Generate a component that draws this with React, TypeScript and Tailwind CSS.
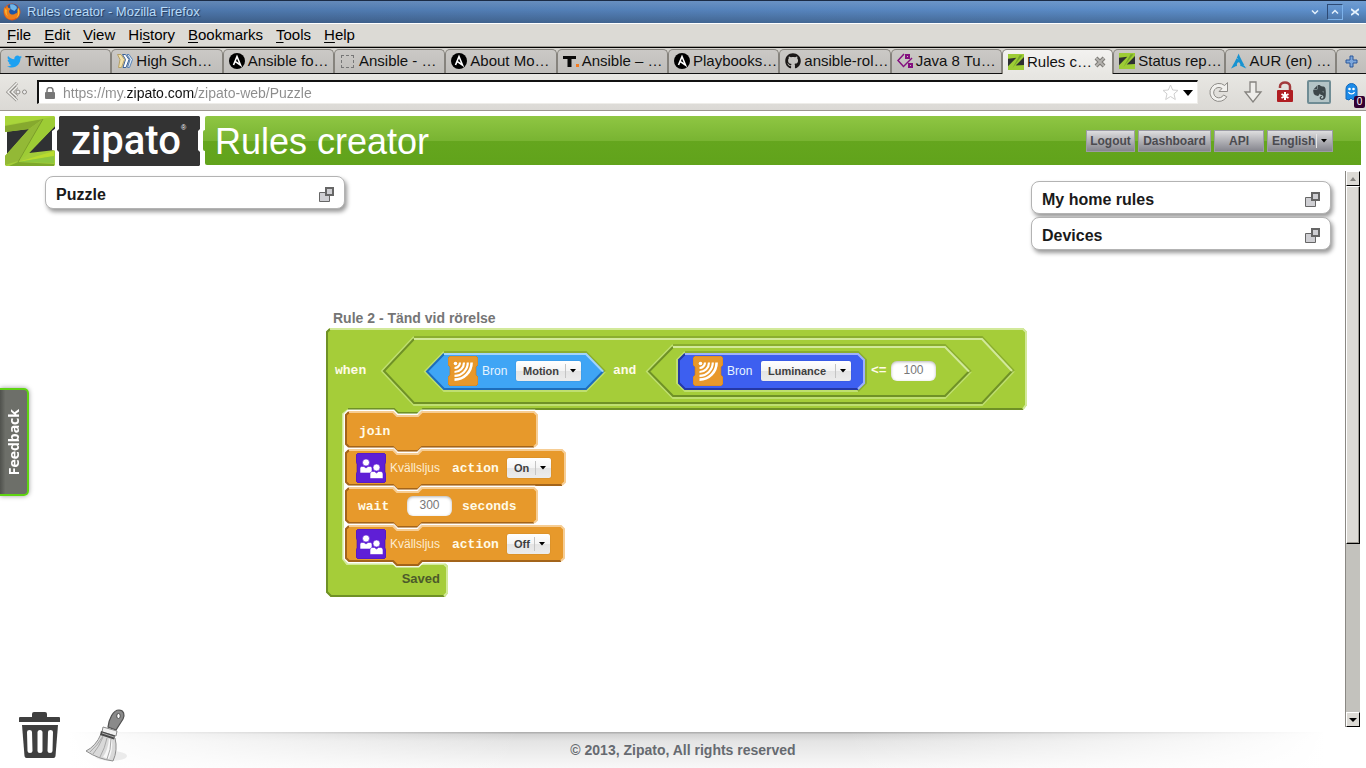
import type { ReactNode } from "react";
import { FaEvernote, FaGithub, FaTwitter } from "react-icons/fa";
import { SiArchlinux } from "react-icons/si";
import clsx from "clsx";

/* ---------- browser icons ---------- */

function FirefoxIcon() {
     return (
          <svg width="18" height="18" viewBox="0 0 18 18" aria-hidden="true">
               <circle cx="9" cy="9" r="8.5" fill="#d9541a" />
               <circle cx="9.5" cy="7" r="6.3" fill="#1f56a5" />
               <path d="M7 1.500a6 6 0 0 1 7 3.4l-2.500 3-4-2z" fill="#6fb6e8" />
               <path
                    d="M1 4.500 3 5l1-2.500 1.200 2.200c1 .2 2 .7 2.300 1.400L6 8l.6 2.200c1.600 2 4.600 1.600 5.600.2 1.800.2 2.500-1 2.300-3.400l1.500 2c-.4 4.600-3.400 7.500-7.500 7.500C3.500 16.500 0 12 1 4.500z"
                    fill="#ee7f1b"
               />
               <path d="M15 4.500c2.500 3 2 9-2 11 2.500-3.500 2.500-6 1.500-8.500z" fill="#fbc02d" />
               <path d="M2 6c-.5 3 .5 6 3 7.500C3.500 11 3.500 9 4 7z" fill="#f9b233" />
          </svg>
     );
}

function AnsibleIcon() {
     return (
          <svg width="16" height="16" viewBox="0 0 16 16" aria-hidden="true">
               <circle cx="8" cy="8" r="8" fill="#000" />
               <path d="M4.500 12 8 3.500l3.500 8.500L6 8.300" fill="none" stroke="#fff" strokeWidth="1.600" />
          </svg>
     );
}

function BooksIcon() {
     return (
          <svg width="16" height="16" viewBox="0 0 16 16" strokeWidth="1" aria-hidden="true">
               <path d="M10 1.500h2l3.500 5-3 8h-2l2.500-8z" fill="#dbe9f8" stroke="#5b83b5" />
               <path d="M5.500 1.500h3l3.500 5-3 8H6l2.500-8z" fill="#fff" stroke="#3b6399" />
               <path d="M.5 1.500h3.500l3.500 5-3 8H1.500L3 6.500z" fill="#f1e0a8" stroke="#b5a069" />
          </svg>
     );
}

function TIcon() {
     return (
          <svg width="16" height="16" viewBox="0 0 16 16" aria-hidden="true">
               <path d="M0 3h13v3H8.500v8h-4V6H0z" fill="#0a0a0a" />
               <path d="M13 11h3v3h-3z" fill="#f47a1f" />
          </svg>
     );
}

function JavaIcon() {
     return (
          <svg width="16" height="16" viewBox="0 0 16 16" fill="none" stroke="#84107f" aria-hidden="true">
               <path d="M7 1 1 7.500 7 14" strokeWidth="1.500" />
               <path d="M15 5 7 13" strokeWidth="1.500" />
               <path d="M9 2h3v3H9zM12 11h3v3h-3z" strokeWidth="2" />
          </svg>
     );
}

function ZIcon() {
     return (
          <svg width="16" height="16" viewBox="0 0 50 50" aria-hidden="true">
               <path d="M0 0h50v50H0z" fill="#2e3032" />
               <path d="M0 0h50v9L24 36l26-2v16H0V38l26-26L0 15z" fill="#9dcc35" />
               <path d="M36 4h9L14 44z" fill="#74a52a" />
          </svg>
     );
}

function BackIcon() {
     return (
          <svg width="22" height="20" viewBox="0 0 22 20" fill="none" aria-hidden="true">
               <path d="m11 1-9 9 9 8.500M11 5 6 10l5 4.500" stroke="#8e8c88" strokeWidth="3" />
               <path d="m11 1-9 9 9 8.500M11 5 6 10l5 4.500" stroke="#f1f0ed" strokeWidth="1.500" />
               <circle cx="12" cy="10" r="2" stroke="#8e8c88" fill="#eee" />
               <circle cx="18.500" cy="10" r="2" stroke="#8e8c88" fill="#eee" />
          </svg>
     );
}

function PadlockIcon() {
     return (
          <svg width="12" height="12" viewBox="0 0 12 12" aria-hidden="true">
               <path d="M3 6V3.500a3 3 0 0 1 6 0V6" fill="none" stroke="#777" strokeWidth="1.500" />
               <rect x="1" y="5" width="10" height="7" rx="1" fill="#777" />
          </svg>
     );
}

function StarIcon() {
     return (
          <svg width="17" height="17" viewBox="0 0 17 17" aria-hidden="true">
               <path
                    d="m8.500 1 2.200 5 5.300.4-4 3.500 1.300 5.600-4.800-3-4.800 3L5 9.900 1 6.400 6.300 6z"
                    fill="#fff"
                    stroke="#cfcfcf"
               />
          </svg>
     );
}

function ReloadIcon() {
     return (
          <svg width="22" height="22" viewBox="0 0 22 22" aria-hidden="true">
               <path
                    d="M19.500 1.500v9H11l3-3A5.200 5.200 0 1 0 15.500 14l3.300 1.800A9 9 0 1 1 16.700 4.500z"
                    fill="#f1f0ed"
                    stroke="#8e8c88"
               />
          </svg>
     );
}

function DownloadIcon() {
     return (
          <svg width="20" height="22" viewBox="0 0 20 22" aria-hidden="true">
               <path d="M7 1h6v10h5l-8 10-8-10h5z" fill="#eeedea" stroke="#85837f" strokeWidth="1.300" />
          </svg>
     );
}

function RedLockIcon() {
     return (
          <svg width="18" height="22" viewBox="0 0 18 22" aria-hidden="true">
               <path d="M4 7V5.500C4 0 14 0 14 5.500V10" fill="none" stroke="#a33a3c" strokeWidth="2.500" />
               <rect x="1" y="9" width="16" height="12" rx="1" fill="#b01d22" />
               <path d="M9 11v8M5.500 13l7 4M12.500 13l-7 4" stroke="#fff" strokeWidth="2" />
          </svg>
     );
}

function GhostIcon() {
     return (
          <svg width="15" height="18" viewBox="0 0 15 18" aria-hidden="true">
               <path
                    d="M2 16V6a5.500 5.500 0 0 1 11 0v10l-2-1.500L9 17l-2-2-2 2z"
                    fill="#1b8ae8"
                    stroke="#1568b8"
               />
               <circle cx="5.500" cy="6" r="1.300" fill="#fff" />
               <circle cx="9.500" cy="6" r="1.300" fill="#fff" />
               <path d="M4.500 9c1 2.500 5 2.500 6 0" fill="none" stroke="#fff" strokeWidth="1.200" />
          </svg>
     );
}

/* ---------- browser chrome ---------- */

function TitleBar() {
     return (
          <div className="flex h-[23px] items-center justify-between border-t border-[#1b2b45] bg-[linear-gradient(180deg,rgba(255,255,255,.12),transparent_40%,rgba(0,0,0,.22)),linear-gradient(90deg,#4b73a7,#5e90cc)] pr-[3px] pl-[3px]">
               <div className="flex items-center gap-[6px]">
                    <FirefoxIcon />
                    <span className="text-[13px] leading-5 text-[#b9dcf8] [text-shadow:1px_1px_1px_#22385c]">
                         Rules creator - Mozilla Firefox
                    </span>
               </div>
               <div className="flex items-center gap-1 text-[#e4f1fc]">
                    <button aria-label="Minimize" className="flex size-4 items-center justify-center">
                         <svg width="8" height="8" viewBox="0 0 8 8" fill="none" stroke="currentColor" strokeWidth="1.500">
                              <path d="m1 2.500 3 3 3-3" />
                         </svg>
                    </button>
                    <button
                         aria-label="Maximize"
                         className="flex size-4 items-center justify-center border border-t-[#2d4a75] border-r-[#7db2ea] border-b-[#7db2ea] border-l-[#2d4a75]"
                    >
                         <svg width="8" height="8" viewBox="0 0 8 8" fill="none" stroke="currentColor" strokeWidth="1.500">
                              <path d="m1 5.500 3-3 3 3" />
                         </svg>
                    </button>
                    <button aria-label="Close" className="flex size-4 items-center justify-center">
                         <svg width="8" height="8" viewBox="0 0 8 8" fill="none" stroke="currentColor" strokeWidth="1.800">
                              <path d="m0 1 8 6M0 7l8-6" />
                         </svg>
                    </button>
               </div>
          </div>
     );
}

const MENUS = [
     ["", "F", "ile"],
     ["", "E", "dit"],
     ["", "V", "iew"],
     ["Hi", "s", "tory"],
     ["", "B", "ookmarks"],
     ["", "T", "ools"],
     ["", "H", "elp"],
];

function MenuBar() {
     return (
          <div className="flex h-[25px] items-center gap-[13px] border-t border-b border-t-white border-b-black bg-[#dcdad5] px-[7px] pb-[2px] text-[15px] leading-5 text-black shadow-[inset_0_-1px_0_#9d9a93]">
               {MENUS.map(([before, key, after]) => (
                    <button key={key + after}>
                         {before}
                         <span className="underline underline-offset-2">{key}</span>
                         {after}
                    </button>
               ))}
          </div>
     );
}

type TabItem = { label: string; icon: ReactNode; active?: boolean };

const TABS: TabItem[] = [
     { label: "Twitter", icon: <FaTwitter size={15} color="#1da1f2" /> },
     { label: "High Sch…", icon: <BooksIcon /> },
     { label: "Ansible fo…", icon: <AnsibleIcon /> },
     {
          label: "Ansible - …",
          icon: <span className="block size-[13px] border border-dashed border-[#777]" />,
     },
     { label: "About Mo…", icon: <AnsibleIcon /> },
     { label: "Ansible – …", icon: <TIcon /> },
     { label: "Playbooks…", icon: <AnsibleIcon /> },
     { label: "ansible-rol…", icon: <FaGithub size={16} color="#1b1817" /> },
     { label: "Java 8 Tu…", icon: <JavaIcon /> },
     { label: "Rules c…", icon: <ZIcon />, active: true },
     { label: "Status rep…", icon: <ZIcon /> },
     { label: "AUR (en) …", icon: <SiArchlinux size={16} color="#1793d1" /> },
];

function TabStrip() {
     return (
          <div className="flex h-[26px] bg-[#d3d1cc] pt-px shadow-[inset_0_-1px_0_#111]">
               {TABS.map((tab, i) => (
                    <div
                         key={i}
                         className={clsx(
                              "flex min-w-0 flex-1 items-center rounded-t-[5px] border-x border-t border-[#86837d] pr-1 pb-px pl-[5px]",
                              tab.active
                                   ? "bg-linear-to-b from-[#f3f2f0] to-[#e8e7e3]"
                                   : "mb-px bg-linear-to-b from-[#cbc9c6] to-[#bfbdba]",
                         )}
                    >
                         <button className="flex min-w-0 flex-1 items-center gap-[3px] text-[15px] leading-5 whitespace-nowrap text-[#111]">
                              <span className="flex w-4 shrink-0 justify-center">{tab.icon}</span>
                              {tab.label}
                         </button>
                         {tab.active && (
                              <button aria-label="Close tab" className="px-0.5">
                                   <svg width="12" height="12" viewBox="0 0 12 12">
                                        <path d="m2 2 8 8M10 2l-8 8" stroke="#7c7a76" strokeWidth="4" />
                                        <path d="m2 2 8 8M10 2l-8 8" stroke="#b4b2ae" strokeWidth="2" />
                                   </svg>
                              </button>
                         )}
                    </div>
               ))}
               <button
                    aria-label="New tab"
                    className="mb-px flex w-[30px] items-center justify-center rounded-tl-[5px] border-t border-l border-[#86837d] bg-linear-to-b from-[#cbc9c6] to-[#bfbdba]"
               >
                    <svg width="13" height="13" viewBox="0 0 13 13">
                         <path d="M5 1h3v4h4v3H8v4H5V8H1V5h4z" fill="#7da7dc" stroke="#2b569a" />
                    </svg>
               </button>
          </div>
     );
}

function NavBar() {
     return (
          <div className="flex h-[37px] items-center border-b border-[#9b9690] bg-linear-to-b from-[#e8e7e3] to-[#dbd9d5] pr-px pl-[6px]">
               <button aria-label="Back" className="w-[31px]">
                    <BackIcon />
               </button>
               <div className="flex h-6 flex-1 items-center border border-t-2 border-l-2 border-[#eeede9] border-t-[#111] border-l-[#111] bg-white pr-1 pl-[5px]">
                    <PadlockIcon />
                    {/* the host part of the address is darker than the rest */}
                    <input
                         aria-label="Address"
                         defaultValue="https://my.zipato.com/zipato-web/Puzzle"
                         className="ml-[7px] h-5 min-w-0 flex-1 bg-[linear-gradient(90deg,#8c8c8c_64px,#111_64px,#111_132px,#8c8c8c_132px)] bg-clip-text text-[14px] leading-5 text-transparent outline-none"
                    />
                    <button aria-label="Bookmark this page">
                         <StarIcon />
                    </button>
                    <button aria-label="Show history" className="ml-1">
                         <svg width="10" height="6" viewBox="0 0 10 6">
                              <path d="M0 0h10L5 6z" />
                         </svg>
                    </button>
               </div>
               <div className="ml-[10px] flex items-center gap-[13px]">
                    <button aria-label="Reload">
                         <ReloadIcon />
                    </button>
                    <button aria-label="Downloads">
                         <DownloadIcon />
                    </button>
                    <button aria-label="Passwords">
                         <RedLockIcon />
                    </button>
                    <button
                         aria-label="Clip page"
                         className="flex size-6 items-center justify-center rounded-xs border-2 border-[#6f8c94] bg-[#b4c4c6] text-[#3d474a]"
                    >
                         <FaEvernote size={17} />
                    </button>
                    <button aria-label="Trackers" className="relative h-6 w-[21px]">
                         <GhostIcon />
                         <span className="absolute right-0 -bottom-1 h-3 w-[11px] rounded-xs bg-[#330033] text-center text-[10px] leading-3 text-white">
                              0
                         </span>
                    </button>
               </div>
          </div>
     );
}

/* ---------- zipato header ---------- */

function Logo() {
     return (
          <div className="relative h-[50px] w-[195px] shrink-0">
               <svg className="absolute inset-0" width="195" height="50" viewBox="0 0 195 50" aria-hidden="true">
                    <path d="M2 2h48v11l-3 2v19l3 2v12H2z" fill="#2f3133" />
                    <path d="M1 0h48l1 1v9L24 37l26-3v15l-1 1H1l-1-1V40l24-27L0 16V1z" fill="#a3cd39" />
                    <path d="M0 10 38 3 24 13 0 16z" fill="#86a92e" />
                    <path d="M0 0h50L36 3 0 9z" fill="#a9d53a" />
                    <path d="M38 3 24 13 0 40v9l13-4z" fill="#93b936" />
                    <path d="M38 3 50 2v8L24 37l-11 9z" fill="#9dcc35" />
                    <path d="m13 46 36-11v5z" fill="#b9dc2e" />
                    <path d="m13 46 36-6v7z" fill="#8cc63f" />
                    <path d="m13 46 36 2v2H4z" fill="#7da82b" />
                    <path d="M38 3 13 46" stroke="#6b8a24" strokeWidth=".7" />
                    <path d="M50 13v22l-2-2V16z" fill="#fff" />
                    <path
                         d="M55 0h139l1 1v12l-2 2v19l2 2v13l-1 1H55l-1-1V36l-2-2V15l2-2V1z"
                         fill="#333"
                    />
               </svg>
               <span className="absolute top-0 left-[66px] font-[Roboto] text-[40px] leading-[50px] font-medium text-white">
                    zipato
               </span>
               <span className="absolute top-[7px] left-[176px] text-[7px] leading-[10px] text-white">®</span>
          </div>
     );
}

function HeaderButton({ children, className }: { children: ReactNode; className: string }) {
     return (
          <button
               className={clsx(
                    "h-[22px] border border-[#9c9ca4] bg-linear-to-b from-[#dededf] to-[#86868e] text-[12px] leading-5 font-bold text-[#4b4b50]",
                    className,
               )}
          >
               {children}
          </button>
     );
}

function Arrow() {
     return (
          <svg width="6" height="4" viewBox="0 0 6 4" aria-hidden="true">
               <path d="M0 0h6L3 3.500z" fill="#000" />
          </svg>
     );
}

function Header() {
     return (
          <header className="mx-[5px] mt-[5px] flex h-[50px]">
               <Logo />
               <div className="relative mb-px ml-[5px] flex flex-1 items-center justify-between rounded-l-xs bg-[linear-gradient(180deg,#8fc643,#79b432_50%,#65a61e_50%,#61a31b)] pr-[28px] pl-[10px]">
                    <span className="absolute top-[14px] -left-[2px] h-[21px] w-[3px] rounded-l-xs bg-[linear-gradient(180deg,#82bc3a,#79b432_50%,#65a61e_50%)]" />
                    <h1 className="pt-[2px] text-[36px] leading-[47px] text-white">Rules creator</h1>
                    <nav className="flex gap-[3px]">
                         <HeaderButton className="w-[49px]">Logout</HeaderButton>
                         <HeaderButton className="w-[73px]">Dashboard</HeaderButton>
                         <HeaderButton className="w-[50px]">API</HeaderButton>
                         <div className="relative">
                              <select
                                   aria-label="Language"
                                   className="block h-[22px] w-[66px] appearance-none border border-[#9c9ca4] bg-linear-to-b from-[#dededf] to-[#86868e] pl-1 text-[12px] leading-5 font-bold text-[#4b4b50]"
                              >
                                   <option>English</option>
                              </select>
                              <span className="pointer-events-none absolute inset-y-1 right-[6px] flex items-center border-l border-[#e6e6e6] pl-1">
                                   <Arrow />
                              </span>
                         </div>
                    </nav>
               </div>
          </header>
     );
}

/* ---------- floating panels ---------- */

function Panel({ title }: { title: string }) {
     return (
          <section className="flex h-[33px] w-[300px] items-center justify-between rounded-[8px] border border-[#b3b3b3] bg-white pr-[10px] pl-[10px] shadow-[2px_3px_4px_rgba(0,0,0,.4)]">
               <h2 className="pt-[5px] text-[16px] leading-5 font-bold text-[#1a1a1a]">{title}</h2>
               <button aria-label={`Open ${title}`} className="pt-[4px]">
                    <svg width="16" height="16" viewBox="0 0 16 16" fill="#cfcfd3" stroke="#666">
                         <path d="M1.500 5.500h10v9h-10z" strokeWidth="1" />
                         <path d="M8 1h7v7H8z" strokeWidth="2" />
                    </svg>
               </button>
          </section>
     );
}

/* ---------- puzzle blocks ---------- */

const TONES = {
     groove: { fill: "none", light: "#d2e99a", dark: "#6f9126" },
     sky: { fill: "#3fa5f5", light: "#a3d4fb", dark: "#1d6dbb" },
     royal: { fill: "#3d5ff0", light: "#a0b2fb", dark: "#2438a6" },
};

type SlotProps = {
     tone: keyof typeof TONES;
     w: number;
     h: number;
     cut: number;
     rounded?: boolean;
     className?: string;
     children: ReactNode;
};

// Bevelled outline at distance d from the edge, as a lit part and a shaded part.
function bevel(w: number, h: number, cut: number, rounded: boolean, d: number) {
     if (rounded) {
          return {
               lit: `M${cut},${d} H${w - cut} L${w - d},${cut} V${h - cut} L${w - cut},${h - d}`,
               shaded: `M${cut},${d} L${d},${cut} V${h - cut} L${cut},${h - d} H${w - cut}`,
          };
     }
     const mid = h / 2;
     return {
          lit: `M${cut},${d} H${w - cut} L${w - d},${mid}`,
          shaded: `M${cut},${d} L${d},${mid} L${cut},${h - d} H${w - cut} L${w - d},${mid}`,
     };
}

function Slot({ tone, w, h, cut, rounded = false, className, children }: SlotProps) {
     const { fill, light, dark } = TONES[tone];
     const outer = bevel(w, h, cut, rounded, -1);
     const inner = bevel(w, h, cut, rounded, 1);
     const body = rounded
          ? `M${cut},0 H${w - cut} L${w},${cut} V${h - cut} L${w - cut},${h} H${cut} L0,${h - cut} V${cut} Z`
          : `M${cut},0 H${w - cut} L${w},${h / 2} L${w - cut},${h} H${cut} L0,${h / 2} Z`;
     return (
          <div className={clsx("relative flex items-center", className)}>
               <svg
                    className="absolute inset-0 overflow-visible"
                    width={w}
                    height={h}
                    fill="none"
                    strokeWidth="2"
                    aria-hidden="true"
               >
                    <path d={outer.shaded} stroke="#bfdf70" />
                    <path d={outer.lit} stroke="#8aae2f" />
                    <path d={body} fill={fill} />
                    <path d={inner.shaded} stroke={dark} />
                    <path d={inner.lit} stroke={light} />
               </svg>
               <div className="relative flex items-center">{children}</div>
          </div>
     );
}

function SensorIcon() {
     return (
          <svg width="30" height="30" viewBox="0 0 30 30" aria-hidden="true">
               <path
                    d="M2 0h26l2 2v7l-2 2v8l2 2v7l-2 2H2l-2-2v-7l2-2v-8L0 9V2z"
                    fill="#e8982b"
                    stroke="#c97a17"
                    strokeWidth=".6"
               />
               <circle cx="7.500" cy="7.500" r="1.800" fill="#fff" />
               <g fill="none" stroke="#fff" strokeWidth="2.200">
                    <path d="M12 6.500A5.500 5.500 0 0 1 6.500 12" />
                    <path d="M16 6.500A9.500 9.500 0 0 1 6.500 16" />
                    <path d="M19.800 6.500A13.300 13.300 0 0 1 6.500 19.800" />
                    <path d="M23.600 6.500A17.100 17.100 0 0 1 6.500 23.600" strokeWidth="2.600" />
               </g>
          </svg>
     );
}

function PeopleIcon() {
     return (
          <svg width="30" height="30" viewBox="0 0 30 30" aria-hidden="true">
               <path
                    d="M2 0h26l2 2v7l-1 2v8l1 2v7l-2 2H2l-2-2v-7l1-2v-8L0 9V2z"
                    fill="#5f1fd6"
                    stroke="#4310a8"
                    strokeWidth=".6"
               />
               <g fill="#fff" stroke="#5f1fd6" strokeWidth=".6">
                    <circle cx="10" cy="9.500" r="3.500" />
                    <path d="M4 20v-4.500c0-1.500 1-2 2-2h2l2 1.500 2-1.500h2c1 0 2 .5 2 2V20z" />
                    <circle cx="20.500" cy="14.500" r="3.500" />
                    <path d="M14 25.500V21c0-1.500 1-2.500 2.500-2.500h2l2 1.500 2-1.500h2c1.500 0 2.500 1 2.500 2.500v4.500z" />
               </g>
          </svg>
     );
}

type DropdownProps = { label: string; value: string; options: string[]; className: string };

function Dropdown({ label, value, options, className }: DropdownProps) {
     return (
          <div className={clsx("relative", className)}>
               <select
                    aria-label={label}
                    defaultValue={value}
                    className="block h-5 w-full appearance-none rounded-xs bg-[linear-gradient(180deg,#fff,#f4f4f4_50%,#e4e4e4_50%,#ececec)] pl-[7px] text-[11px] leading-5 font-bold text-[#3f3f3f] shadow-[0_0_1px_rgba(0,0,0,.4)]"
               >
                    {options.map((o) => (
                         <option key={o}>{o}</option>
                    ))}
               </select>
               <span className="pointer-events-none absolute inset-y-[3px] right-[5px] flex items-center border-l border-[#c4c4c4] pl-1">
                    <Arrow />
               </span>
          </div>
     );
}

function NumberBox({ label, value }: { label: string; value: string }) {
     return (
          <input
               aria-label={label}
               defaultValue={value}
               className="h-5 w-[45px] rounded-[6px] bg-white pb-[2px] text-center text-[12px] leading-4 text-[#777] shadow-[inset_0_1px_3px_rgba(0,0,0,.3)]"
          />
     );
}

function Word({ children, className }: { children: ReactNode; className?: string }) {
     return (
          <span
               className={clsx(
                    "font-['Liberation_Mono',monospace] text-[13px] leading-4 font-bold text-[#fffbe8]",
                    className,
               )}
          >
               {children}
          </span>
     );
}

function Block({ w, children }: { w: number; children: ReactNode }) {
     const top = `M4,1 H48 L52,5 H73 L77,1 H${w - 4} L${w - 1},4 V33 L${w - 4},36`;
     const bottom = `M4,1 L1,4 V33 L4,36 H48 L52,40 H73 L77,36 H${w - 4}`;
     const body = `${top} H77 L73,40 H52 L48,36 H4 L1,33 V4 Z`;
     return (
          <li className="relative flex h-[38px] items-center">
               <svg
                    className="absolute top-0 left-0 overflow-visible"
                    width={w}
                    height="42"
                    fill="none"
                    strokeWidth="2"
                    aria-hidden="true"
               >
                    <path d={body} stroke="#fff" strokeWidth="5" strokeOpacity=".85" />
                    <path d={body} fill="#e7992b" />
                    <path d={bottom} stroke="#a3641a" />
                    <path d={top} stroke="#f6cd94" />
               </svg>
               <div className="relative flex items-center">{children}</div>
          </li>
     );
}

function ActionBlock({ w, value, select }: { w: number; value: string; select: string }) {
     return (
          <Block w={w}>
               <span className="ml-[11px]">
                    <PeopleIcon />
               </span>
               <span className="ml-1 w-[62px] text-[12px] leading-4 text-[#fdeccf]">Kvällsljus</span>
               <Word className="w-[55px] pt-[2px]">action</Word>
               <Dropdown label="Action" value={value} options={["On", "Off"]} className={select} />
          </Block>
     );
}

function Rule() {
     return (
          <article className="absolute top-[142px] left-[326px] w-[701px]">
               <h3 className="h-5 pl-[7px] text-[14px] leading-5 font-bold text-[#757575]">
                    Rule 2 - Tänd vid rörelse
               </h3>
               <div className="relative">
                    <svg
                         className="absolute inset-0"
                         width="701"
                         height="269"
                         fill="none"
                         strokeWidth="2"
                         aria-hidden="true"
                    >
                         <path
                              d="M4,0 H697 L701,4 V77 L697,82 H97 L93,86 H72 L68,82 H22 L18,86 V231 L22,235 H119 L122,238 V265 L119,269 H5 L0,264 V4 Z"
                              fill="#a5cd39"
                         />
                         <path d="M4,1 L1,4 V264 L5,268 H118" stroke="#6f9126" />
                         <path d="M697,81 H97 L93,85 H72 L68,81 H22" stroke="#6f9126" />
                         <path d="M4,1 H697 L700,4 V77 L697,81" stroke="#d2e99a" />
                         <path d="M22,82 L17,86 V231 L21,236 H118 L121,239 V265 L118,268" stroke="#d2e99a" />
                    </svg>

                    <div className="relative flex h-[82px] items-center pt-1 pl-[9px]">
                         <Word className="w-[48px]">when</Word>
                         <Slot tone="groove" w={630} h={66} cut={31} className="h-[66px] w-[630px] pl-[43px]">
                              <Slot tone="sky" w={178} h={37} cut={18} className="h-[37px] w-[178px] pl-[22px]">
                                   <SensorIcon />
                                   <span className="w-[38px] pl-1 text-[12px] leading-4 text-[#e6f4ff]">Bron</span>
                                   <Dropdown
                                        label="Bron sensor"
                                        value="Motion"
                                        options={["Motion", "Luminance"]}
                                        className="w-[65px]"
                                   />
                              </Slot>
                              <Word className="w-[44px] pl-[9px]">and</Word>
                              <Slot tone="groove" w={322} h={51} cut={25} className="h-[51px] w-[322px] pl-[30px]">
                                   <Slot
                                        tone="royal"
                                        w={187}
                                        h={37}
                                        cut={7}
                                        rounded
                                        className="h-[37px] w-[187px] pl-[15px]"
                                   >
                                        <SensorIcon />
                                        <span className="w-[38px] pl-1 text-[12px] leading-4 text-[#e6f4ff]">
                                             Bron
                                        </span>
                                        <Dropdown
                                             label="Bron measure"
                                             value="Luminance"
                                             options={["Motion", "Luminance"]}
                                             className="w-[90px]"
                                        />
                                   </Slot>
                                   <Word className="w-[26px] pl-[6px]">&lt;=</Word>
                                   <NumberBox label="Luminance limit" value="100" />
                              </Slot>
                         </Slot>
                    </div>

                    <ul className="ml-[19px] pt-px">
                         <Block w={193}>
                              <Word className="pt-1 pl-[14px]">join</Word>
                         </Block>
                         <ActionBlock w={221} value="On" select="w-[44px]" />
                         <Block w={193}>
                              <Word className="w-[62px] pt-[2px] pl-[13px]">wait</Word>
                              <NumberBox label="Wait time" value="300" />
                              <Word className="pt-[2px] pl-[10px]">seconds</Word>
                         </Block>
                         <ActionBlock w={220} value="Off" select="w-[43px]" />
                    </ul>

                    <p className="relative h-[34px] w-[122px] pt-[6px] pr-2 text-right text-[13px] leading-5 font-bold text-[#4c5a2a]">
                         Saved
                    </p>
               </div>
          </article>
     );
}

/* ---------- page furniture ---------- */

function Scrollbar() {
     const key =
          "flex h-[15px] items-center justify-center border border-t-white border-r-black border-b-black border-l-white bg-[#dcdad5]";
     return (
          <div className="mt-[5px] mr-[6px] mb-[5px] flex w-[15px] flex-col border-l border-[#8a8883] bg-[#c3c2bd]">
               <button aria-label="Scroll up" className={key}>
                    <svg width="6" height="4" viewBox="0 0 6 4">
                         <path d="M0 4h6L3 0z" fill="#85837f" />
                    </svg>
               </button>
               <div className="flex-[357] border border-t-white border-r-black border-b-black border-l-white bg-[#dcdad5] shadow-[inset_-1px_-1px_0_#9d9a93]" />
               <div className="flex-[169]" />
               <button aria-label="Scroll down" className={key}>
                    <svg width="8" height="4" viewBox="0 0 8 4">
                         <path d="M0 0h8L4 4z" />
                    </svg>
               </button>
          </div>
     );
}

function TrashIcon() {
     return (
          <svg width="42" height="47" viewBox="0 0 42 47" aria-hidden="true">
               <path d="M13 5V2q0-2 2-2h11q2 0 2 2v3h12q1 0 1 1v4H0V6q0-1 1-1z" fill="#3f3f3f" />
               <path d="M3 13h36l-2.500 31q-.2 2-2 2H7.500q-1.800 0-2-2z" fill="#3f3f3f" />
               <g fill="#fff">
                    <path d="M8 20q0-2 2.500-2t2.500 2l.5 19q0 2-2.500 2T8.500 39z" />
                    <rect x="18.500" y="18" width="5" height="23" rx="2.500" />
                    <path d="M34 20q0-2-2.500-2T29 20l-.5 19q0 2 2.500 2t2.500-2z" />
               </g>
          </svg>
     );
}

function BroomIcon() {
     return (
          <svg width="44" height="54" viewBox="0 0 44 54" aria-hidden="true">
               <ellipse cx="26" cy="47" rx="16" ry="5" fill="#000" opacity=".07" />
               <path
                    d="M23 18C24 10 28 1 34 1c5 0 6 5 4 9l-7 11z"
                    fill="#8a8a8a"
                    stroke="#505050"
                    strokeWidth="1.200"
               />
               <ellipse cx="33.500" cy="7" rx="1.800" ry="2.500" fill="#fff" stroke="#505050" />
               <path d="m18 18 14 4-1 5-14-4z" fill="#f0f0f0" stroke="#8a8a8a" />
               <path d="M16 25q-5 12-15 17 12 8 27 10 5-11 2-23z" fill="#d9d9d9" stroke="#8e8e8e" />
               <path d="M24 30q-1 11-6 18l6 2q4-9 3-19z" fill="#f6f6f6" />
               <path
                    d="M18 28q-4 10-10 17M22 29q-2 10-7 19M26 30q0 11-4 20M18 27q-6 10-13 16"
                    fill="none"
                    stroke="#a8a8a8"
               />
               <path d="m16 22 14 4.500-1 4L15 26z" fill="#4a4a4a" />
               <path d="m17 24 12 4" stroke="#aaa" />
          </svg>
     );
}

function Footer() {
     return (
          <footer className="relative flex h-9 items-center justify-center bg-[linear-gradient(90deg,#fff_5%,transparent_38%,transparent_62%,#fff_97%),linear-gradient(180deg,#b0b0b0_1px,#d2d2d2_2px,#e4e4e4_25%,#f8f8f8)]">
               <p className="text-[14px] leading-5 font-bold text-[#666a70]">© 2013, Zipato, All rights reserved</p>
               <div className="absolute bottom-[5px] left-[19px] flex items-end gap-6">
                    <button aria-label="Trash" className="pb-1">
                         <TrashIcon />
                    </button>
                    <button aria-label="Clean up">
                         <BroomIcon />
                    </button>
               </div>
          </footer>
     );
}

export default function App() {
     return (
          <div className="flex min-h-screen flex-col bg-white font-['Liberation_Sans',Arial,sans-serif]">
               <TitleBar />
               <MenuBar />
               <TabStrip />
               <NavBar />
               <Header />
               <main className="relative flex flex-1 justify-between overflow-hidden">
                    <div className="pt-[10px] pl-[45px]">
                         <Panel title="Puzzle" />
                    </div>
                    <Rule />
                    <div className="flex">
                         <div className="flex flex-col gap-[3px] pt-[15px] pr-[14px]">
                              <Panel title="My home rules" />
                              <Panel title="Devices" />
                         </div>
                         <Scrollbar />
                    </div>
                    <button className="absolute top-[222px] left-0 flex h-[108px] w-[29px] items-center justify-center rounded-r-[5px] border-y-2 border-r-2 border-[#5fd312] bg-linear-to-r from-[#50524d] to-[#6d6f69] to-20% shadow-[0_0_5px_rgba(0,0,0,.4)]">
                         <span className="rotate-180 font-['Open_Sans',sans-serif] text-[14px] leading-5 font-bold text-white [writing-mode:vertical-rl]">
                              Feedback
                         </span>
                    </button>
               </main>
               <Footer />
          </div>
     );
}
